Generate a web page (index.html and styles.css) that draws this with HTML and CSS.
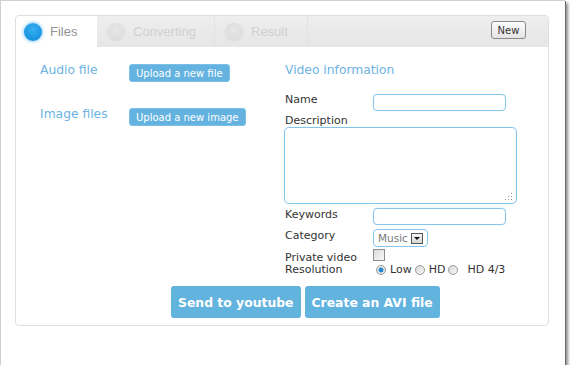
FILE: index.html
```html
<!DOCTYPE html>
<html lang="en">
<head>
    <meta charset="UTF-8">
    <title>Audio to video</title>
    <link rel="stylesheet" href="styles.css">
</head>
<body>
    <div class="window">
        <div class="card">
            <div class="tab-bar">
                <div class="tab active"><span class="dot"></span>Files</div>
                <div class="tab tab-converting"><span class="dot"></span>Converting</div>
                <div class="tab tab-result"><span class="dot"></span>Result</div>
                <div class="tab-fill">
                    <button class="btn-new">New</button>
                </div>
            </div>

            <div class="card-body">
                <div class="col-left">
                    <div class="upload-row">
                        <div class="heading upload-label">Audio file</div>
                        <button class="btn-small">Upload a new file</button>
                    </div>
                    <div class="upload-row">
                        <div class="heading upload-label">Image files</div>
                        <button class="btn-small">Upload a new image</button>
                    </div>
                </div>

                <div class="col-right">
                    <div class="heading">Video information</div>
                    <div class="form-row row-name">
                        <div class="label">Name</div>
                        <div class="field"></div>
                    </div>
                    <div class="label label-desc">Description</div>
                    <div class="textarea"><span class="grip"></span></div>
                    <div class="form-row row-keywords">
                        <div class="label">Keywords</div>
                        <div class="field"></div>
                    </div>
                    <div class="form-row row-category">
                        <div class="label">Category</div>
                        <div class="select">Music<span class="select-arrow"></span></div>
                    </div>
                    <div class="form-row row-private">
                        <div class="label">Private video</div>
                        <span class="checkbox"></span>
                    </div>
                    <div class="form-row row-resolution">
                        <div class="label">Resolution</div>
                        <div class="radios">
                            <span class="radio checked"></span><span class="radio-text">Low</span>
                            <span class="radio"></span><span class="radio-text">HD</span>
                            <span class="radio"></span><span class="radio-text wide">HD 4/3</span>
                        </div>
                    </div>
                </div>
            </div>

            <div class="actions">
                <button class="btn-big">Send to youtube</button>
                <button class="btn-big">Create an AVI file</button>
            </div>
        </div>
    </div>
</body>
</html>
```

FILE: styles.css
```css
body {
    margin: 0;
    background-color: white;
    font-family: 'DejaVu Sans', Verdana, sans-serif;
}

.window {
    width: 565px;
    height: 365px;
    box-sizing: border-box;
    border-left: 1px solid #cfcfcf;
    border-top: 1px solid #cfcfcf;
    padding: 14px 0 0 14px;
    background-color: white;
    box-shadow: 1px 1px 0 #6a6a6a, 3px 3px 3px rgba(0, 0, 0, 0.45);
}

.card {
    width: 534px;
    height: 311px;
    box-sizing: border-box;
    border: 1px solid #dedede;
    border-radius: 4px;
    overflow: hidden;
}

/* tabs */

.tab-bar {
    display: flex;
    height: 31px;
    background: linear-gradient(#eeeeee, #e6e6e6);
}

.tab {
    display: flex;
    align-items: center;
    gap: 8px;
    box-sizing: border-box;
    padding-left: 10px;
    border-right: 1px solid #e2e2e2;
    font-family: 'Liberation Sans', Arial, sans-serif;
    font-size: 13px;
    color: #d0d0d0;
}

.tab.active {
    width: 81px;
    padding-left: 8px;
    background-color: white;
    border-right: none;
    color: #929292;
}

.tab-converting {
    width: 118px;
}

.tab-result {
    width: 93px;
}

.dot {
    width: 18px;
    height: 18px;
    border-radius: 50%;
    background: radial-gradient(circle at 50% 40%, #e6e6e6, #dadada);
    box-shadow: 0 0 1px #d2d2d2;
}

.tab.active .dot {
    background: radial-gradient(circle at 50% 35%, #36b0f2, #0b86d6);
    box-shadow: 0 0 3px 1px rgba(60, 170, 245, 0.55);
}

.tab-fill {
    flex: 1;
    display: flex;
    justify-content: flex-end;
    align-items: flex-start;
    padding: 5px 22px 0 0;
}

.btn-new {
    width: 35px;
    height: 18px;
    padding: 0;
    border: 1px solid #8a8a8a;
    border-radius: 3px;
    background: linear-gradient(#fdfdfd, #e4e4e4);
    font-family: 'DejaVu Sans', Verdana, sans-serif;
    font-size: 10px;
    color: #333;
}

/* body */

.card-body {
    display: flex;
    padding: 15px 0 0 24px;
}

.heading {
    font-size: 12.3px;
    line-height: 16px;
    color: #6db3e3;
}

.col-left {
    width: 245px;
    display: flex;
    flex-direction: column;
    gap: 24px;
}

.upload-row {
    display: flex;
    align-items: flex-start;
}

.upload-label {
    width: 89px;
}

.btn-small {
    height: 18px;
    margin-top: 2px;
    padding: 0 6px;
    border: 1px solid #7cc0e8;
    border-radius: 3px;
    background-color: #63b2df;
    font-family: 'DejaVu Sans', Verdana, sans-serif;
    font-size: 10px;
    color: white;
}

.col-right {
    display: flex;
    flex-direction: column;
    width: 233px;
}

.col-right .heading {
    margin-bottom: 16px;
}

.label {
    width: 88px;
    font-size: 11px;
    line-height: 13px;
    color: #333;
}

.form-row {
    display: flex;
    align-items: flex-start;
}

.field {
    width: 133px;
    height: 17px;
    box-sizing: border-box;
    border: 1px solid #86c6ec;
    border-radius: 4px;
    box-shadow: 0 0 1px #bfe2f7;
}

.row-name {
    height: 20px;
}

.row-name .label {
    margin-top: -1px;
}

.label-desc {
    width: auto;
    height: 13px;
}

.textarea {
    position: relative;
    width: 233px;
    height: 77px;
    margin-left: -1px;
    box-sizing: border-box;
    border: 1px solid #86c6ec;
    border-radius: 5px;
    box-shadow: 0 0 1px #bfe2f7;
}

.grip {
    position: absolute;
    right: 4px;
    bottom: 3px;
    width: 8px;
    height: 8px;
    background:
        radial-gradient(circle, #999 0.7px, transparent 1px) 0 0 / 3px 3px;
    clip-path: polygon(100% 0, 100% 100%, 0 100%);
}

.row-keywords {
    height: 21px;
    margin-top: 4px;
}

.row-category {
    height: 21px;
}

.select {
    display: flex;
    align-items: center;
    gap: 3px;
    width: 55px;
    height: 18px;
    box-sizing: border-box;
    padding-left: 4px;
    border: 1px solid #86c6ec;
    border-radius: 4px;
    font-size: 10.5px;
    color: #777;
}

.select-arrow {
    position: relative;
    width: 12px;
    height: 11px;
    box-sizing: border-box;
    border: 1px solid #555;
    background: linear-gradient(#f4f4f4, #d8d8d8);
}

.select-arrow::after {
    content: "";
    position: absolute;
    left: 2px;
    top: 3px;
    border-left: 3px solid transparent;
    border-right: 3px solid transparent;
    border-top: 3px solid #111;
}

.row-private {
    height: 14px;
}

.row-private .label {
    margin-top: 1px;
}

.checkbox {
    width: 12px;
    height: 12px;
    margin-top: -1px;
    box-sizing: border-box;
    border: 1px solid #8e8e8e;
    background: linear-gradient(135deg, #dcdcdc, #fafafa);
}

.row-resolution {
    margin-top: -1px;
}

.radios {
    display: flex;
    align-items: center;
    height: 13px;
    font-size: 11px;
    color: #333;
}

.radio {
    width: 10px;
    height: 10px;
    margin-left: 3px;
    box-sizing: border-box;
    border: 1px solid #9a9a9a;
    border-radius: 50%;
    background: linear-gradient(135deg, #d8d8d8, #f8f8f8);
}

.radio.checked {
    background: radial-gradient(circle, #1d7bc4 0, #2c8fd8 2.2px, #e6e6e6 2.8px);
}

.radio-text {
    margin-left: 4px;
}

.radio-text.wide {
    margin-left: 9px;
}

/* actions */

.actions {
    display: flex;
    gap: 4px;
    padding: 10px 0 0 155px;
}

.btn-big {
    height: 32px;
    padding: 0 7px;
    border: none;
    border-radius: 3px;
    background-color: #63b3df;
    font-family: 'DejaVu Sans', Verdana, sans-serif;
    font-size: 12.4px;
    font-weight: bold;
    color: white;
}
```
